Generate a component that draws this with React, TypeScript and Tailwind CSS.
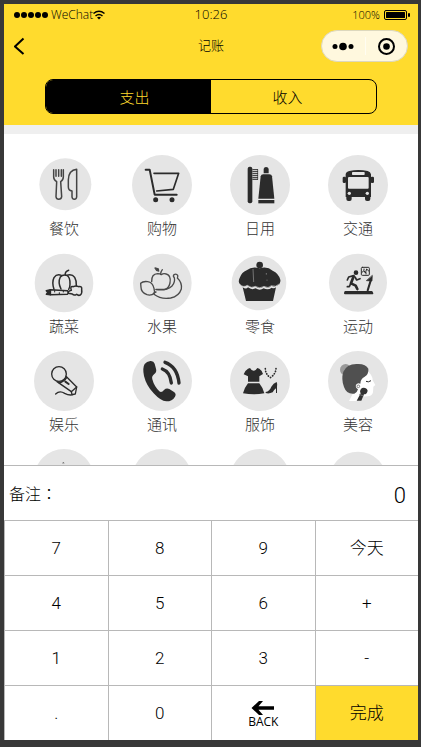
import { ReactNode, useState } from 'react'
import clsx from 'clsx'

const INK = '#2b2b2b'

type Category = {
  label: string
  icon: ReactNode
  // centre and radius of the grey disc behind the icon
  disc?: [number, number, number]
}

const categories: Category[] = [
  {
    label: '餐饮',
    disc: [94, 88, 78],
    icon: (
      <g fill="none" stroke="#444" strokeWidth="4.5" strokeLinecap="round" strokeLinejoin="round">
        <path d="M59 44V66Q59 75 68 80L66 125Q67 133 74 133Q82 133 83 125L80 80Q88 75 88 66V44" />
        <path d="M66 44V64M74 44V64M82 44V64" />
        <path d="M128 43V126Q127 133 121 133Q115 133 114 126V108Q103 106 103 96V74Q104 46 128 43Z" />
      </g>
    )
  },
  {
    label: '购物',
    icon: (
      <g fill="none" stroke={INK} strokeWidth="6" strokeLinecap="round" strokeLinejoin="round">
        <path d="M41 44H53L68 119H134" />
        <path d="M66 55H140L124 103L74 108" strokeWidth="5" />
        <circle cx="71" cy="134" r="4.5" fill={INK} />
        <circle cx="120" cy="134" r="4.5" fill={INK} />
      </g>
    )
  },
  {
    label: '日用',
    icon: (
      <g fill={INK}>
        <rect x="53" y="35" width="14" height="110" rx="6" />
        <path d="M67 44H84M67 50H84M67 56H84M67 62H84M67 68H84M67 73H84" stroke={INK} strokeWidth="3" />
        <path d="M83 43V74" stroke={INK} strokeWidth="2" />
        <path d="M101 55V42Q102 36 108 36Q115 36 116 42V55Z" />
        <path d="M92 64Q93 58 100 58H118Q125 58 126 64L133 131H85Z" />
        <rect x="85" y="135" width="48" height="10" />
      </g>
    )
  },
  {
    label: '交通',
    icon: (
      <g fill={INK}>
        <path d="M53 58Q54 50 64 48Q91 42 119 48Q128 50 129 58V126H53Z" />
        <rect x="44" y="65" width="10" height="19" rx="4" />
        <rect x="128" y="65" width="10" height="19" rx="4" />
        <rect x="55" y="118" width="16" height="20" rx="6" />
        <rect x="111" y="118" width="16" height="20" rx="6" />
        <rect x="72" y="51" width="38" height="9" rx="2" fill="#e5e5e5" />
        <rect x="60" y="66" width="62" height="35" rx="3" fill="#e5e5e5" />
        <circle cx="64" cy="115" r="5" fill="#e5e5e5" />
        <circle cx="118" cy="115" r="5" fill="#e5e5e5" />
      </g>
    )
  },
  {
    label: '蔬菜',
    disc: [90, 90, 88],
    icon: (
      <g fill="none" stroke={INK} strokeWidth="4.5" strokeLinecap="round" strokeLinejoin="round">
        <path d="M60 109Q53 88 60 74Q68 62 82 67" />
        <path d="M81 108Q71 88 79 72Q87 63 98 67Q109 72 108 94Q108 103 104 109" />
        <path d="M97 67Q114 61 122 73Q128 83 127 98" />
        <path d="M94 66Q92 56 104 52" />
        <path d="M49 110L100 113Q106 118 100 124L49 125Z" />
        <path d="M37 113L49 110V125L37 124L41 118Z" fill={INK} />
        <path d="M62 112V117M76 119V124M88 113V117" strokeWidth="3" />
        <path d="M102 117Q107 113 112 112Q107 98 118 101Q126 97 134 101Q145 99 143 110Q145 121 139 126Q133 129 128 124Q120 129 115 123L103 121" />
      </g>
    )
  },
  {
    label: '水果',
    disc: [91, 90, 88],
    icon: (
      <g fill="none" stroke="#4a4a4a" strokeWidth="4" strokeLinecap="round" strokeLinejoin="round">
        <path d="M59 86Q58 63 77 62Q85 62 88 65Q94 60 103 63Q118 67 114 90Q110 107 99 109H72" />
        <path d="M86 64Q86 56 91 50" />
        <path d="M69 45L79 48L80 54Q72 53 69 45Z" fill={INK} />
        <path d="M26 91Q33 84 47 86Q62 88 66 106L68 119Q58 129 45 125Q27 119 27 103Z" />
        <path d="M72 110Q105 114 120 99Q130 88 127 74Q122 70 126 65Q133 61 137 67Q138 72 136 75Q151 89 148 108Q141 130 116 135Q87 140 66 124Q64 118 72 117" />
      </g>
    )
  },
  {
    label: '零食',
    disc: [87, 90, 82],
    icon: (
      <g fill={INK}>
        <circle cx="89" cy="36" r="10" />
        <path d="M50 52Q66 39 89 46Q112 39 128 53Q146 61 151 80Q153 92 143 97Q133 103 124 98Q115 108 102 100Q89 109 76 100Q64 107 52 97Q39 103 31 95Q22 87 30 73Q35 58 50 52Z" />
        <path d="M38 103Q48 110 54 103Q65 112 77 106Q89 114 101 106Q114 112 125 104Q132 108 138 103L129 144H48Z" />
        <path d="M29 93Q39 105 52 97Q64 107 76 100Q89 109 102 100Q115 108 124 98Q137 104 149 92" fill="none" stroke="#bbb" strokeWidth="2" />
        <path d="M69 48L71 87M109 60V65M111 80V83" fill="none" stroke="#999" strokeWidth="2" />
      </g>
    )
  },
  {
    label: '运动',
    disc: [90, 89, 87],
    icon: (
      <g fill="none" stroke={INK} strokeWidth="6" strokeLinecap="round" strokeLinejoin="round">
        <circle cx="84" cy="59" r="4" fill={INK} />
        <path d="M77 70L69 91L83 98L88 108" strokeWidth="8" />
        <path d="M77 68L62 72L58 81M81 72L86 81L96 77M68 92L64 101L58 101" strokeWidth="5" />
        <path d="M52 117H131L133 121H51Z" />
        <path d="M119 112L128 83" />
        <path d="M133 68L132 84L116 83Z" fill={INK} strokeWidth="2" />
        <rect x="100" y="43" width="24" height="24" rx="3" strokeWidth="3" />
        <path d="M102 58L108 53L112 60L116 48L122 54" strokeWidth="3" />
        <path d="M108 48V51M114 59V63" strokeWidth="3" />
      </g>
    )
  },
  {
    label: '娱乐',
    icon: (
      <g fill="none" stroke={INK} strokeWidth="4" strokeLinecap="round" strokeLinejoin="round">
        <circle cx="75" cy="69" r="22" />
        <path d="M69 92L112 122L128 108L96 76" />
        <path d="M112 122L114 131L124 129L128 108" />
        <path d="M76 96Q90 92 98 80" />
        <path d="M94 92L104 99" strokeWidth="6" />
        <path d="M65 129Q77 117 92 127Q105 134 117 131" />
      </g>
    )
  },
  {
    label: '通讯',
    icon: (
      <g>
        <path
          d="M38 39Q44 31 55 30Q65 29 68 38L72 53Q75 63 67 69Q58 76 61 85Q66 105 82 121Q89 126 96 117Q103 110 112 114L126 123Q134 129 129 137Q121 151 103 151Q86 150 65 127Q43 104 36 75Q31 50 38 39Z"
          fill={INK}
        />
        <path
          d="M91 54Q114 62 118 96M99 34Q136 47 141 96"
          fill="none"
          stroke={INK}
          strokeWidth="10"
          strokeLinecap="round"
        />
      </g>
    )
  },
  {
    label: '服饰',
    icon: (
      <g fill={INK}>
        <path d="M54 53L60 51Q70 68 82 51L88 53Q96 58 99 69L88 76V92H54V76L41 70Q44 59 54 53Z" />
        <path d="M54 97H88Q98 109 103 127Q72 133 39 127Q44 109 54 97Z" />
        <path
          d="M106 53Q106 69 121 80Q137 69 138 53"
          fill="none"
          stroke={INK}
          strokeWidth="5"
          strokeDasharray="1 7"
          strokeLinecap="round"
        />
        <path d="M107 123Q119 120 124 107Q130 96 140 93Q143 99 141 108V126H138V112Q132 117 128 124Q117 129 107 126Z" />
      </g>
    )
  },
  {
    label: '美容',
    icon: (
      <g>
        <circle cx="53" cy="56" r="17" fill="#999" />
        <path
          d="M118 61Q134 72 134 88L142 102L136 107L135 124Q132 136 119 136L103 137L97 150H63L79 119L80 97Q101 96 118 61Z"
          fill="#fff"
        />
        <path
          d="M79 128Q56 131 48 108Q39 85 46 62Q56 40 85 39Q113 37 121 53Q123 69 109 78Q98 83 97 98Q85 94 83 105Q84 113 90 115Q88 124 79 128Z"
          fill="#505050"
        />
        <path d="M114 91Q121 95 129 89" fill="none" stroke={INK} strokeWidth="3" />
        <circle cx="91" cy="106" r="4" fill="#fff" stroke="#505050" strokeWidth="2" />
        <path d="M102 111Q115 108 119 119Q117 130 108 130L100 149H86L98 127Q93 119 102 111Z" fill="#333" />
        <path d="M94 130L106 135" stroke="#777" strokeWidth="3" />
      </g>
    )
  },
  { label: '', icon: <path d="M84 43L88 40L92 43Z" fill={INK} /> },
  { label: '', icon: null },
  { label: '', icon: null },
  { label: '', icon: null, disc: [90, 94, 86] }
]

const keys = ['7', '8', '9', '今天', '4', '5', '6', '+', '1', '2', '3', '-', '.', '0', 'BACK', '完成']

function StatusBar() {
  return (
    <div className="grid h-[22px] grid-cols-3 items-center px-2 font-['Open_Sans','Noto_Sans',sans-serif] text-xs">
      <div className="flex items-center pl-0.5">
        <svg viewBox="0 0 35 8" className="mr-0.5 h-2 w-[35px]">
          <circle cx="3" cy="4" r="3" />
          <circle cx="10" cy="4" r="3" />
          <circle cx="17" cy="4" r="3" />
          <circle cx="24" cy="4" r="3" />
          <circle cx="31" cy="4" r="3" />
        </svg>
        <span className="font-light">WeChat</span>
        <svg viewBox="0 0 12 10" className="h-2.5 w-3 shrink-0" fill="none" stroke="#000" strokeWidth="1.5">
          <path d="M0.5 3.5Q6 -1 11.5 3.5M2.5 6Q6 3 9.5 6" />
          <path d="M4 7.5Q6 6 8 7.5L6 9.5Z" fill="#000" stroke="none" />
        </svg>
      </div>
      <span className="text-center text-[13px] font-light">10:26</span>
      <div className="flex items-center justify-end gap-1">
        <span className="text-[11px] font-light">100%</span>
        <svg viewBox="0 0 26 10" className="h-2.5 w-[26px]">
          <rect x="0.5" y="0.5" width="22" height="9" rx="1.5" fill="none" stroke="#000" />
          <rect x="2" y="2" width="19" height="6" rx="0.5" />
          <rect x="24" y="3" width="2" height="4" rx="1" />
        </svg>
      </div>
    </div>
  )
}

function NavBar() {
  return (
    <div className="grid h-10 grid-cols-3 items-center px-2.5">
      <button type="button" aria-label="返回" className="w-5">
        <svg viewBox="0 0 14 18" className="h-[18px] w-3.5" fill="none" stroke="#000" strokeWidth="2">
          <path d="M9.5 1.5L1 9.5L9.5 17" />
        </svg>
      </button>
      <h1 className="text-center text-[13px] font-light">记账</h1>
      <button
        type="button"
        aria-label="菜单"
        className="flex h-8 w-[87px] items-center justify-self-end rounded-full border border-[#ddd8bd] bg-[#fff8de]"
      >
        <svg viewBox="0 0 85 30" className="h-[30px] w-[85px]">
          <circle cx="13" cy="15.5" r="2.5" />
          <circle cx="21" cy="15.5" r="3.8" />
          <circle cx="29" cy="15.5" r="2.5" />
          <path d="M43.5 6V24" stroke="#fffdf2" />
          <circle cx="64.5" cy="15.5" r="7.5" fill="none" stroke="#000" strokeWidth="2" />
          <circle cx="64.5" cy="15.5" r="3.3" />
        </svg>
      </button>
    </div>
  )
}

function CategoryItem({ label, icon, disc = [90, 90, 90] }: Category) {
  return (
    <button type="button" className="flex flex-col items-center">
      <svg viewBox="0 0 180 180" className="size-[60px]">
        <circle cx={disc[0]} cy={disc[1]} r={disc[2]} fill="#e5e5e5" />
        {icon}
      </svg>
      <span className="h-7 text-[15px] leading-7 font-light text-[#333]">{label}</span>
    </button>
  )
}

function BackKey() {
  return (
    <span className="flex flex-col items-center pt-0.5">
      <svg viewBox="0 0 24 14" className="h-3.5 w-6">
        <path d="M0.500 7L8 0H12L7.500 5.300H23V8.700H7.500L12 14H8Z" />
      </svg>
      <span className="font-['Open_Sans','Noto_Sans',sans-serif] text-xs leading-[14px] font-normal">
        BACK
      </span>
    </span>
  )
}

function App() {
  const [tab, setTab] = useState('支出')
  const [note, setNote] = useState('')
  const [amount, setAmount] = useState('0')

  const handleKey = (key: string) => {
    if (key === 'BACK') {
      setAmount(amount.length > 1 ? amount.slice(0, -1) : '0')
    } else if (key !== '今天' && key !== '完成') {
      setAmount(amount === '0' && /\d/.test(key) ? key : amount + key)
    }
  }

  return (
    <div className="h-screen bg-[#383838] pt-1 pr-[3px] pb-[7px] pl-1 font-['Roboto','Noto_Sans_CJK_SC',sans-serif] text-black">
      <div className="flex h-full flex-col bg-white">
        <header className="border-b-[9px] border-[#efefef] bg-[#ffdb2d]">
          <StatusBar />
          <NavBar />
          <div className="mx-[41px] mt-[13px] mb-[11px] flex h-[35px] overflow-hidden rounded-lg border border-black">
            {['支出', '收入'].map((name) => (
              <button
                key={name}
                type="button"
                onClick={() => setTab(name)}
                className={clsx(
                  'flex-1 pt-1 text-[15px] font-light first:pl-3 last:pr-3',
                  tab === name && 'bg-black text-[#ffdb2d]'
                )}
              >
                {name}
              </button>
            ))}
          </div>
        </header>

        <main className="grid min-h-0 flex-1 grid-cols-4 content-start gap-y-2.5 overflow-y-auto px-[11px] pt-[21px] [scrollbar-width:none]">
          {categories.map((category, index) => (
            <CategoryItem key={index} {...category} />
          ))}
        </main>

        <footer className="border-t border-[#b8b8b8]">
          <div className="flex h-[54px] items-center pr-3 pl-[5px]">
            <label htmlFor="note" className="font-['Noto_Sans_CJK_TC',sans-serif] text-base font-light">
              备注：
            </label>
            <input
              id="note"
              value={note}
              onChange={(e) => setNote(e.target.value)}
              className="min-w-0 flex-1 text-base outline-none"
            />
            <output className="pt-1 text-[22px] font-light">{amount}</output>
          </div>
          <div className="grid grid-cols-4">
            {keys.map((key) => (
              <button
                key={key}
                type="button"
                onClick={() => handleKey(key)}
                className={clsx(
                  'flex h-[55px] items-center justify-center border-t border-l border-[#b8b8b8] pt-0.5 text-[17px] font-light',
                  key === '完成' && 'bg-[#ffdb2d]'
                )}
              >
                {key === 'BACK' ? <BackKey /> : key}
              </button>
            ))}
          </div>
        </footer>
      </div>
    </div>
  )
}

export default App
